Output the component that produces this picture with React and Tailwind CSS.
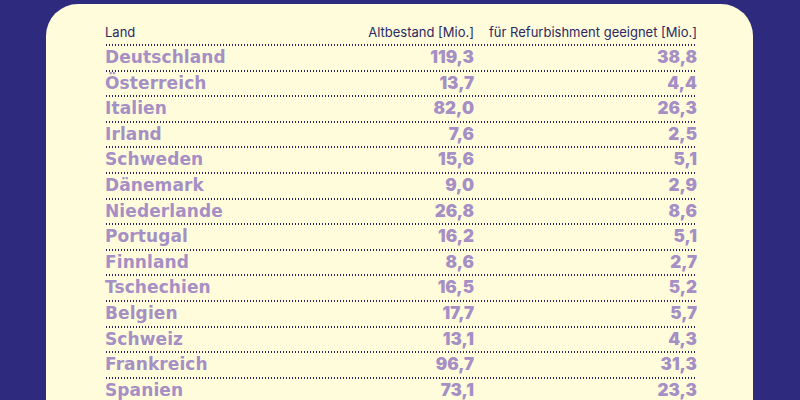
import React from "react";

const rows = [
    ["Deutschland", "119,3", "38,8"],
    ["Österreich", "13,7", "4,4"],
    ["Italien", "82,0", "26,3"],
    ["Irland", "7,6", "2,5"],
    ["Schweden", "15,6", "5,1"],
    ["Dänemark", "9,0", "2,9"],
    ["Niederlande", "26,8", "8,6"],
    ["Portugal", "16,2", "5,1"],
    ["Finnland", "8,6", "2,7"],
    ["Tschechien", "16,5", "5,2"],
    ["Belgien", "17,7", "5,7"],
    ["Schweiz", "13,1", "4,3"],
    ["Frankreich", "96,7", "31,3"],
    ["Spanien", "73,1", "23,3"],
];

function Dots() {
    return (
        <div className="h-[2px] w-full bg-[radial-gradient(circle,#26235c_0.9px,transparent_1.1px)] bg-[length:3px_2px] bg-repeat-x" />
    );
}

export default function App() {
    return (
        <div className="w-[800px] h-[400px] overflow-hidden bg-[#2e2b7e] pt-1 pl-[46px] pr-[47px]">
            <div className="h-[420px] rounded-t-[32px] bg-[#fffcdc] pt-5 pl-[59px]">
                <div className="w-[592px]">
                    {/* Header */}
                    <div className="flex items-center pb-1 text-[13px] leading-4 text-[#2b2862] font-['Inter',sans-serif]">
                        <div className="w-[200px]">Land</div>
                        <div className="w-[169px] text-right">Altbestand [Mio.]</div>
                        <div className="w-[223px] text-right">für Refurbishment geeignet [Mio.]</div>
                    </div>
                    <Dots />

                    {rows.map(([land, alt, ref]) => (
                        <div key={land}>
                            <div className="flex items-center h-[23.6px] text-[#a58fc5]">
                                <div className="w-[200px] font-['DejaVu_Sans',sans-serif] font-bold text-[17px] tracking-[0.1px]">
                                    {land}
                                </div>
                                <div className="w-[169px] text-right font-['Inter',sans-serif] font-black text-[17px]">
                                    {alt}
                                </div>
                                <div className="w-[223px] text-right font-['Inter',sans-serif] font-black text-[17px]">
                                    {ref}
                                </div>
                            </div>
                            <Dots />
                        </div>
                    ))}
                </div>
            </div>
        </div>
    );
}
